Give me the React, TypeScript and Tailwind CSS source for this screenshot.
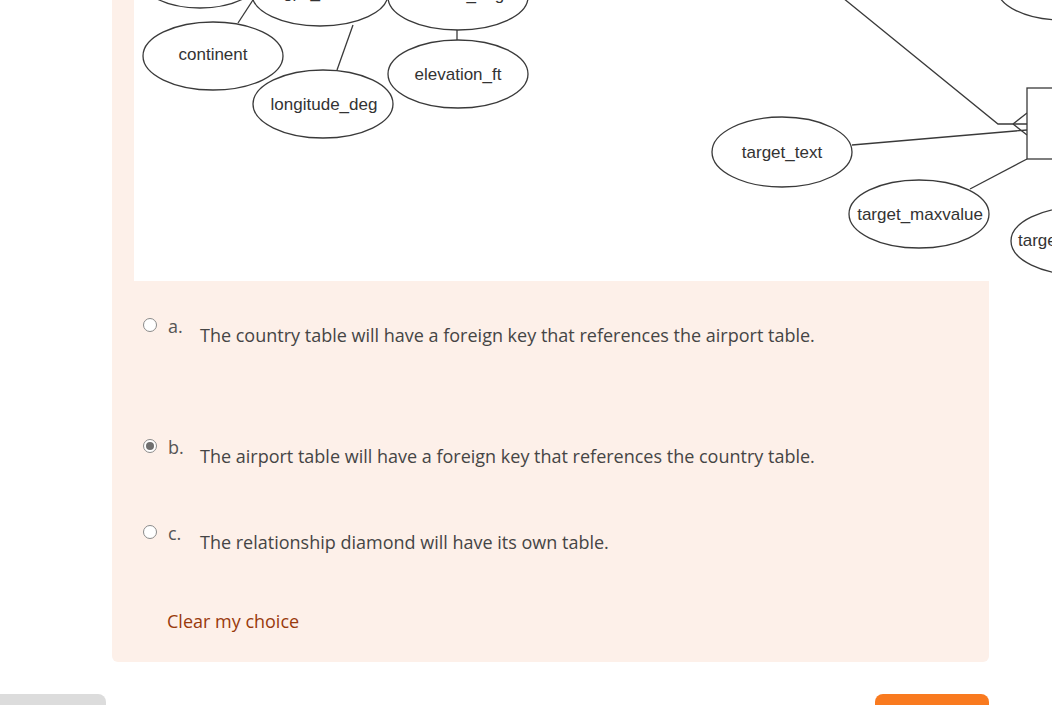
import React from 'react'

const font = { fontFamily: '"Open Sans", "Liberation Sans", sans-serif' }

type OptionProps = {
  letter: string
  text: string
  checked?: boolean
  className?: string
}

const Radio = ({ checked }: { checked?: boolean }) => (
  <span className="mt-[4px] flex h-[14px] w-[14px] shrink-0 items-center justify-center rounded-full border border-[#8a8a8a] bg-white">
    {checked && <span className="h-[8px] w-[8px] rounded-full bg-[#6f6f6f]" />}
  </span>
)

const Option = ({ letter, text, checked, className }: OptionProps) => (
  <div className={`flex items-start ${className ?? ''}`}>
    <Radio checked={checked} />
    <span className="ml-[11px] w-[32px] shrink-0 text-[18px] leading-[24px] text-[#555]">
      {letter}
    </span>
    <div className="mt-[9px] text-[18px] leading-[24px] text-[#454545]">{text}</div>
  </div>
)

const Diagram = () => (
  <svg width="918" height="281" viewBox="0 0 918 281" className="block">
    <g
      transform="translate(-134 0)"
      fill="none"
      stroke="#3a3a3a"
      strokeWidth="1.3"
    >
      <ellipse cx="200" cy="-22" rx="60" ry="30" fill="#fff" />
      <ellipse cx="320" cy="-6" rx="68" ry="32" fill="#fff" />
      <ellipse cx="458" cy="-3" rx="70" ry="33" fill="#fff" />
      <ellipse cx="213" cy="56" rx="70" ry="34" fill="#fff" />
      <ellipse cx="323" cy="104" rx="70" ry="34" fill="#fff" />
      <ellipse cx="458" cy="74" rx="70" ry="34" fill="#fff" />
      <ellipse cx="1062" cy="-12" rx="65" ry="32" fill="#fff" />
      <ellipse cx="782" cy="152" rx="70" ry="35" fill="#fff" />
      <ellipse cx="919" cy="214" rx="70" ry="34" fill="#fff" />
      <ellipse cx="1081" cy="241" rx="70" ry="34" fill="#fff" />

      <path d="M253 0 L238 23" />
      <path d="M353 25 L337 70" />
      <path d="M457 30 L457 40" />
      <path d="M843 -2 L998 124 L1027 124" />
      <path d="M1013 124 L1027 113 M1013 124 L1027 135" />
      <path d="M852 145 L1027 130" />
      <path d="M970 189 L1027 159" />
      <rect x="1027" y="88" width="100" height="71" fill="#fff" />
    </g>
    <g
      transform="translate(-134 0)"
      fill="#333"
      fontFamily='"Liberation Sans", Arial, sans-serif'
      fontSize="17"
    >
      <text x="320" y="-2" textAnchor="middle">
        gps_code
      </text>
      <text x="458" y="0" textAnchor="middle">
        latitude_deg
      </text>
      <text x="213" y="60" textAnchor="middle">
        continent
      </text>
      <text x="324" y="110" textAnchor="middle">
        longitude_deg
      </text>
      <text x="458" y="80" textAnchor="middle">
        elevation_ft
      </text>
      <text x="782" y="158" textAnchor="middle">
        target_text
      </text>
      <text x="920" y="220" textAnchor="middle">
        target_maxvalue
      </text>
      <text x="1018" y="246">
        target_minvalue
      </text>
    </g>
  </svg>
)

export default function App() {
  return (
    <div className="h-[705px] w-full overflow-hidden bg-white" style={font}>
      <div className="ml-[112px] w-[877px] rounded-b-[6px] bg-[#fdf0e9] pb-[28px]">
        <div className="pl-[22px]">
          <div className="w-[918px] bg-white">
            <Diagram />
          </div>
        </div>

        <div className="pl-[31px] pt-[33px]">
          <Option
            letter="a."
            text="The country table will have a foreign key that references the airport table."
          />
          <Option
            letter="b."
            checked
            className="mt-[88px]"
            text="The airport table will have a foreign key that references the country table."
          />
          <Option
            letter="c."
            className="mt-[53px]"
            text="The relationship diamond will have its own table."
          />
          <div className="mt-[55px] pl-[24px]">
            <a href="#" className="text-[18px] leading-[24px] text-[#993a0c]">
              Clear my choice
            </a>
          </div>
        </div>
      </div>

      <div className="mt-[32px] flex w-full items-start">
        <div className="h-[40px] w-[106px] rounded-tr-[8px] bg-[#dcdcdc]" />
        <div className="ml-auto mr-[63px] h-[40px] w-[114px] rounded-[8px] bg-[#f97a1f]" />
      </div>
    </div>
  )
}
